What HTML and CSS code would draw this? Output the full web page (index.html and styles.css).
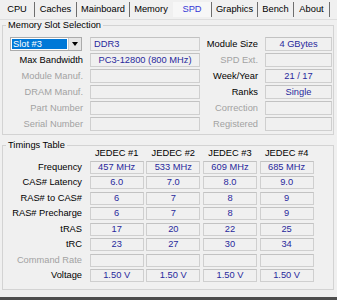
FILE: index.html
```html
<!DOCTYPE html>
<html lang="en">
<head>
  <meta charset="UTF-8" />
  <title>CPU-Z - SPD</title>
  <link rel="stylesheet" href="styles.css">
</head>
<body>
  <div class="tabs">
    <div class="tab">CPU</div>
    <div class="tab">Caches</div>
    <div class="tab">Mainboard</div>
    <div class="tab before">Memory</div>
    <div class="tab active">SPD</div>
    <div class="tab">Graphics</div>
    <div class="tab">Bench</div>
    <div class="tab">About</div>
  </div>

  <div class="panel">
    <fieldset class="group slots">
      <legend>Memory Slot Selection</legend>
      <div class="slot-grid">
        <div class="slot"><span class="slot-value">Slot #3</span><span class="slot-arrow"><i></i></span></div>
        <div class="field left">DDR3</div>
        <div class="label">Module Size</div>
        <div class="field">4 GBytes</div>

        <div class="label">Max Bandwidth</div>
        <div class="field">PC3-12800 (800 MHz)</div>
        <div class="label off">SPD Ext.</div>
        <div class="field"></div>

        <div class="label off">Module Manuf.</div>
        <div class="field"></div>
        <div class="label">Week/Year</div>
        <div class="field">21 / 17</div>

        <div class="label off">DRAM Manuf.</div>
        <div class="field"></div>
        <div class="label">Ranks</div>
        <div class="field">Single</div>

        <div class="label off">Part Number</div>
        <div class="field"></div>
        <div class="label off">Correction</div>
        <div class="field"></div>

        <div class="label off">Serial Number</div>
        <div class="field"></div>
        <div class="label off">Registered</div>
        <div class="field"></div>
      </div>
    </fieldset>

    <fieldset class="group timings">
      <legend>Timings Table</legend>
      <div class="timing-grid">
        <div></div>
        <div class="head">JEDEC #1</div>
        <div class="head">JEDEC #2</div>
        <div class="head">JEDEC #3</div>
        <div class="head">JEDEC #4</div>

        <div class="label">Frequency</div>
        <div class="field">457 MHz</div>
        <div class="field">533 MHz</div>
        <div class="field">609 MHz</div>
        <div class="field">685 MHz</div>

        <div class="label">CAS# Latency</div>
        <div class="field">6.0</div>
        <div class="field">7.0</div>
        <div class="field">8.0</div>
        <div class="field">9.0</div>

        <div class="label">RAS# to CAS#</div>
        <div class="field">6</div>
        <div class="field">7</div>
        <div class="field">8</div>
        <div class="field">9</div>

        <div class="label">RAS# Precharge</div>
        <div class="field">6</div>
        <div class="field">7</div>
        <div class="field">8</div>
        <div class="field">9</div>

        <div class="label">tRAS</div>
        <div class="field">17</div>
        <div class="field">20</div>
        <div class="field">22</div>
        <div class="field">25</div>

        <div class="label">tRC</div>
        <div class="field">23</div>
        <div class="field">27</div>
        <div class="field">30</div>
        <div class="field">34</div>

        <div class="label off">Command Rate</div>
        <div class="field"></div>
        <div class="field"></div>
        <div class="field"></div>
        <div class="field"></div>

        <div class="label">Voltage</div>
        <div class="field">1.50 V</div>
        <div class="field">1.50 V</div>
        <div class="field">1.50 V</div>
        <div class="field">1.50 V</div>
      </div>
    </fieldset>
  </div>

  <div class="bottom"></div>
</body>
</html>
```

FILE: styles.css
```css
* {
  box-sizing: border-box;
}
body {
  margin: 0;
  width: 337px;
  height: 300px;
  overflow: hidden;
  display: flex;
  flex-direction: column;
  background: #f0f0f0;
  color: #000;
  font-family: "Liberation Sans", Arial, sans-serif;
  font-size: 9.3px;
}

/* tab strip */
.tabs {
  display: grid;
  grid-template-columns: 35px 42px 53px 43px 39px 46px 36px 36px;
  height: 20px;
  padding-top: 2px;
  border-bottom: 1px solid #dedede;
}
.tab {
  height: 15px;
  line-height: 15px;
  text-align: center;
  border-right: 1px solid #6e6e6e;
}
.tab.before {
  border-right-color: transparent;
}
.tab.active {
  color: #3636d6;
  background: #f7f7f7;
}

.panel {
  flex: 1;
}

/* group boxes */
.group {
  margin: 0 3px 0 2px;
  padding: 7px 1px 3px 0;
  border: 1px solid #d3d3d3;
  min-width: 0;
}
.group legend {
  margin-left: 3px;
  padding: 0 2px;
  line-height: 10px;
}
.timings {
  margin-top: 5px;
  padding: 0 1px 7px 0;
}

.label {
  text-align: right;
  white-space: nowrap;
}
.label.off {
  color: #a2a2a2;
}
.field {
  border: 1px solid #cfcfcf;
  border-top-color: #c2c2c2;
  color: #28289c;
  text-align: center;
  white-space: nowrap;
}
.field.left {
  text-align: left;
  padding-left: 3px;
}

/* memory slot selection */
.slot-grid {
  display: grid;
  grid-template-columns: 87px 110px 65px 67px;
  grid-auto-rows: 14px;
  row-gap: 2px;
}
.slot-grid .label {
  line-height: 14px;
  padding-right: 7px;
}
.slot-grid .field {
  line-height: 12px;
}
.slot {
  display: flex;
  width: 72px;
  margin-left: 7px;
  border: 1px solid #ababab;
  background: #fff;
}
.slot-value {
  flex: 1;
  margin: 1px;
  padding-left: 1px;
  line-height: 10px;
  background: #0078d7;
  color: #fff;
}
.slot-arrow {
  width: 13px;
  display: flex;
  align-items: center;
  justify-content: center;
  background: #e6e6e6;
  border-left: 1px solid #cacaca;
}
.slot-arrow i {
  border-left: 3.5px solid transparent;
  border-right: 3.5px solid transparent;
  border-top: 4px solid #000;
}

/* timings table */
.timing-grid {
  display: grid;
  grid-template-columns: 84px repeat(4, 54px);
  grid-template-rows: 8px repeat(8, 13px);
  column-gap: 2.67px;
  row-gap: 2.5px;
}
.timing-grid .label {
  line-height: 13px;
  padding-right: 5px;
}
.timing-grid .field {
  line-height: 11px;
}
.head {
  text-align: center;
  line-height: 6px;
}

.bottom {
  height: 3px;
  background: #4e4e4e;
}
```
